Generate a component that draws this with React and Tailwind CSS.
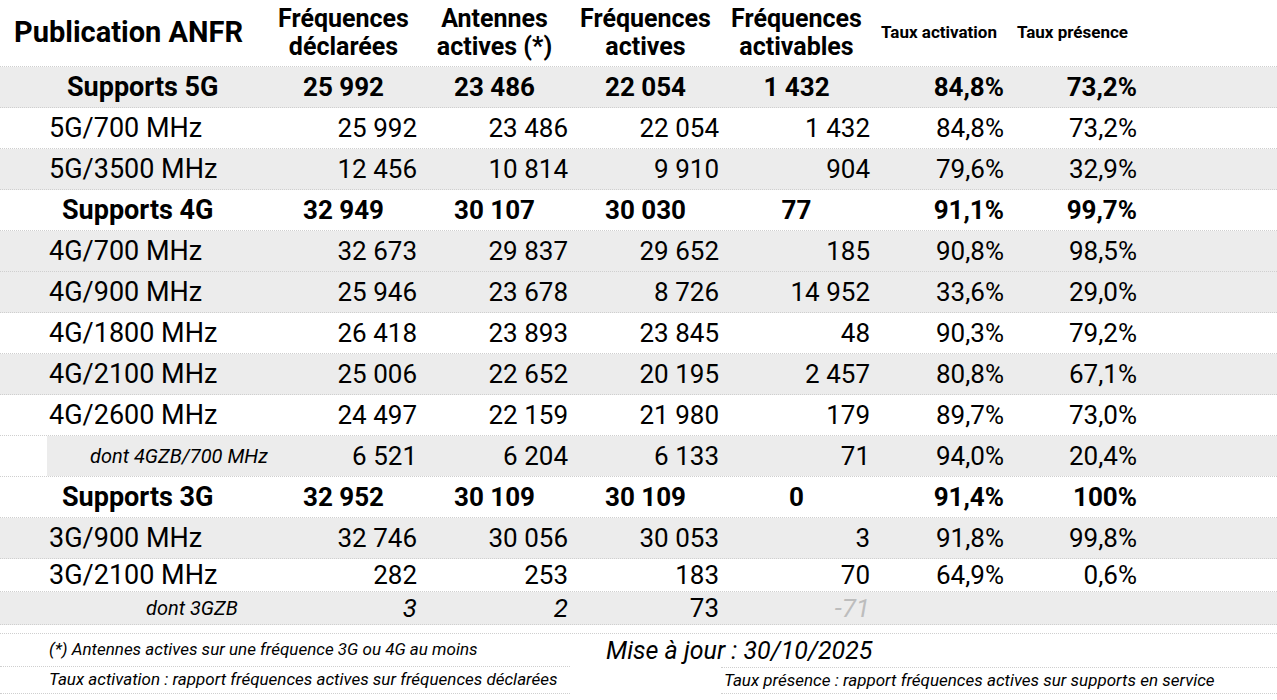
import React from "react";

const COLS = "grid grid-cols-[268px_151px_151px_151px_151px_134px_133px_1fr]";
const COLS_INSET = "grid grid-cols-[221px_151px_151px_151px_151px_134px_133px_1fr]";
const LINE = "border-b border-dotted border-[#cfcfcf]";

const rows = [
  { type: "total", label: "Supports 5G", pad: "pl-[67px]", gray: true, v: ["25 992", "23 486", "22 054", "1 432", "84,8%", "73,2%"] },
  { label: "5G/700 MHz", v: ["25 992", "23 486", "22 054", "1 432", "84,8%", "73,2%"] },
  { label: "5G/3500 MHz", gray: true, v: ["12 456", "10 814", "9 910", "904", "79,6%", "32,9%"] },
  { type: "total", label: "Supports 4G", pad: "pl-[62px]", v: ["32 949", "30 107", "30 030", "77", "91,1%", "99,7%"] },
  { label: "4G/700 MHz", gray: true, v: ["32 673", "29 837", "29 652", "185", "90,8%", "98,5%"] },
  { label: "4G/900 MHz", gray: true, v: ["25 946", "23 678", "8 726", "14 952", "33,6%", "29,0%"] },
  { label: "4G/1800 MHz", v: ["26 418", "23 893", "23 845", "48", "90,3%", "79,2%"] },
  { label: "4G/2100 MHz", gray: true, v: ["25 006", "22 652", "20 195", "2 457", "80,8%", "67,1%"] },
  { label: "4G/2600 MHz", v: ["24 497", "22 159", "21 980", "179", "89,7%", "73,0%"] },
];

const rows3g = [
  { label: "3G/900 MHz", gray: true, h: "h-[41px]", v: ["32 746", "30 056", "30 053", "3", "91,8%", "99,8%"] },
  { label: "3G/2100 MHz", h: "h-[33px] leading-none", v: ["282", "253", "183", "70", "64,9%", "0,6%"] },
];

function DataRow({ row }) {
  const h = row.h || "h-[41px]";
  return (
    <div className={`${COLS} ${h} ${LINE} items-center ${row.gray ? "bg-[#ececec]" : "bg-white"}`}>
      <div className="pl-[49px] text-[27px] whitespace-nowrap">{row.label}</div>
      {row.v.map((x, i) => (
        <div key={i} className="text-right pr-[2px] text-[26px] whitespace-nowrap">
          {x}
        </div>
      ))}
      <div />
    </div>
  );
}

function TotalRow({ row }) {
  return (
    <div className={`${COLS} h-[41px] ${LINE} items-center font-bold ${row.gray ? "bg-[#ececec]" : "bg-white"}`}>
      <div className={`${row.pad} text-[27px] whitespace-nowrap`}>{row.label}</div>
      {row.v.slice(0, 4).map((x, i) => (
        <div key={i} className="text-center text-[26px] whitespace-nowrap">
          {x}
        </div>
      ))}
      {row.v.slice(4).map((x, i) => (
        <div key={i} className="text-right pr-[2px] text-[26px] whitespace-nowrap">
          {x}
        </div>
      ))}
      <div />
    </div>
  );
}

function Row({ row }) {
  return row.type === "total" ? <TotalRow row={row} /> : <DataRow row={row} />;
}

function Header() {
  const heads = [
    ["Fréquences", "déclarées"],
    ["Antennes", "actives (*)"],
    ["Fréquences", "actives"],
    ["Fréquences", "activables"],
  ];
  return (
    <div className={`${COLS} h-[67px] ${LINE} items-center font-bold`}>
      <div className="pl-[14px] text-[29px] whitespace-nowrap">Publication ANFR</div>
      {heads.map((hd, i) => (
        <div key={i} className="text-center text-[25px] leading-[28px] whitespace-nowrap">
          {hd[0]}
          <br />
          {hd[1]}
        </div>
      ))}
      <div className="text-center text-[17px] whitespace-nowrap">Taux activation</div>
      <div className="text-center text-[17px] whitespace-nowrap">Taux présence</div>
      <div />
    </div>
  );
}

export default function App() {
  return (
    <div className="w-[1277px] h-[700px] bg-white text-black font-['Roboto',sans-serif] overflow-hidden">
      <Header />
      {rows.map((r, i) => (
        <Row key={i} row={r} />
      ))}

      {/* dont 4GZB : fond gris décalé */}
      <div className={`h-[41px] pl-[47px] bg-[#ececec] bg-clip-content ${LINE}`}>
        <div className={`${COLS_INSET} h-full items-center`}>
          <div className="pl-[43px] text-[20px] italic whitespace-nowrap">dont 4GZB/700 MHz</div>
          {["6 521", "6 204", "6 133", "71", "94,0%", "20,4%"].map((x, i) => (
            <div key={i} className="text-right pr-[2px] text-[26px] whitespace-nowrap">
              {x}
            </div>
          ))}
          <div />
        </div>
      </div>

      <TotalRow row={{ label: "Supports 3G", pad: "pl-[62px]", v: ["32 952", "30 109", "30 109", "0", "91,4%", "100%"] }} />
      {rows3g.map((r, i) => (
        <DataRow key={i} row={r} />
      ))}

      <div className={`${COLS} h-[33px] ${LINE} items-center bg-[#ececec] leading-none`}>
        <div className="pl-[146px] text-[20px] italic whitespace-nowrap">dont 3GZB</div>
        <div className="text-right pr-[2px] text-[26px] italic">3</div>
        <div className="text-right pr-[2px] text-[26px] italic">2</div>
        <div className="text-right pr-[2px] text-[26px]">73</div>
        <div className="text-right pr-[2px] text-[26px] italic text-[#bdbdbd]">-71</div>
        <div />
        <div />
        <div />
      </div>

      <div className={`h-[9px] ${LINE}`} />

      {/* notes */}
      <div className="grid grid-cols-[570px_151px_1fr] grid-rows-[33px_27px]">
        <div className={`${LINE} flex items-center pl-[49px] text-[17px] italic whitespace-nowrap`}>
          (*) Antennes actives sur une fréquence 3G ou 4G au moins
        </div>
        <div className="col-span-2 flex items-center pl-[36px] text-[25px] italic whitespace-nowrap">
          Mise à jour : 30/10/2025
        </div>
        <div className={`${LINE} flex items-center pl-[49px] text-[17px] italic whitespace-nowrap`}>
          Taux activation : rapport fréquences actives sur fréquences déclarées
        </div>
        <div />
        <div className={`${LINE} border-t flex items-center pl-[3px] text-[17px] italic whitespace-nowrap`}>
          Taux présence : rapport fréquences actives sur supports en service
        </div>
      </div>
    </div>
  );
}
